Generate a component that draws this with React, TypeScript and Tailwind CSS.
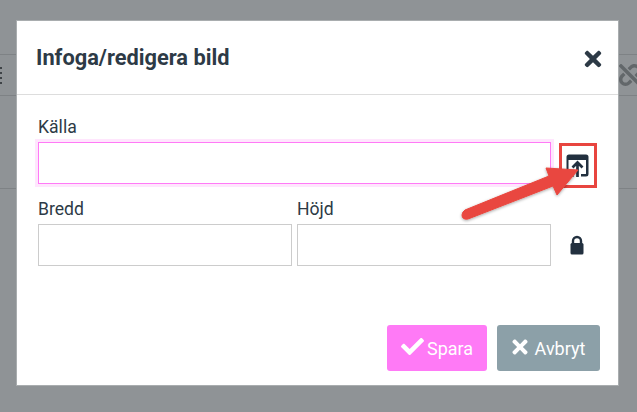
import { FaCheck, FaTimes, FaUnlink } from "react-icons/fa";

function Field({ label }: { label: string }) {
  return (
    <div className="flex flex-col">
      <label className="h-[26px] text-[17.6px] leading-[22px] text-[#2d3a46]">{label}</label>
      <div className="h-[42px] border border-[#cccccc] bg-white" />
    </div>
  );
}

export default function App() {
  return (
    <div className="relative h-[412px] w-[637px] overflow-hidden bg-[#8f9396] font-['Roboto',sans-serif]">
      <div className="mt-[54px] flex h-[42px] items-center justify-between border-y border-[#7e8285]">
        <div className="ml-[-4px] flex h-[17px] w-[6px] flex-col justify-between">
          <span className="h-[2px] w-[6px] bg-[#3e4347]" />
          <span className="h-[2px] w-[6px] bg-[#3e4347]" />
          <span className="h-[2px] w-[6px] bg-[#3e4347]" />
          <span className="h-[2px] w-[6px] bg-[#3e4347]" />
        </div>
        <FaUnlink className="mr-[-4px] h-[22px] w-[22px] text-[#62676a]" />
      </div>
      <div className="mt-[92px] border-t border-[#7e8285]" />

      <div className="absolute left-[17px] top-[21px] flex h-[364px] w-[601px] flex-col bg-white shadow-[0_0_0_1px_#a9adaf]">
        <div className="flex h-[74px] items-center justify-between border-b border-[#dddddd] pl-[19px] pr-[16px]">
          <h1 className="mt-[1px] text-[21.8px] font-bold leading-[26px] text-[#2d3a46]">Infoga/redigera bild</h1>
          <FaTimes className="mt-[3px] h-[24px] w-[18px] text-[#2d3a46]" />
        </div>

        <div className="flex flex-1 flex-col pl-[21px] pr-[18px] pt-[20px]">
          <div className="grid grid-cols-[513px_1fr] gap-x-[8px]">
            <div className="flex flex-col">
              <label className="h-[27px] text-[17.6px] leading-[25px] text-[#2d3a46]">Källa</label>
              <div className="h-[42px] border border-[#ff7af6] bg-white shadow-[0_0_0_3px_#ffe6fd]" />
            </div>
            <div className="mt-[28px] flex h-[45px] w-[38px] items-center justify-center border-[3px] border-[#e8453f]">
              <svg width="23" height="23" viewBox="0 0 23 23" className="ml-[-2px]">
                <path
                  d="M3 0.5h17a2.5 2.5 0 0 1 2.5 2.5v17a2.5 2.5 0 0 1-2.5 2.5h-5v-2.4h4.5a.5.5 0 0 0 .5-.5V6H2.5v14.1a.5.5 0 0 0 .5.5h4.500v2.4H3A2.500 2.500 0 0 1 .5 20V3A2.500 2.500 0 0 1 3 .5z"
                  fill="#22303f"
                />
                <path d="M6.500 13.500l5-5 5 5M11.500 9v14" fill="none" stroke="#22303f" strokeWidth="2.700" />
              </svg>
            </div>
          </div>

          <div className="mt-[10px] grid grid-cols-[254px_254px_1fr] gap-x-[5px]">
            <Field label="Bredd" />
            <Field label="Höjd" />
            <div className="flex items-start justify-center pr-[3px] pt-[37px]">
              <svg width="14" height="20" viewBox="0 0 14 20">
                <path d="M3 9V6a4 4 0 0 1 8 0v3" fill="none" stroke="#22303f" strokeWidth="2.400" />
                <rect x="0.500" y="8" width="13" height="11.500" rx="1.500" fill="#22303f" />
              </svg>
            </div>
          </div>

          <div className="mt-[59px] flex justify-end gap-[10px]">
            <button className="flex h-[46px] w-[100px] items-center justify-center gap-[3px] rounded-[3px] bg-[#ff7af6] text-[18px] text-white">
              <FaCheck className="mt-[-3px] h-[23px] w-[23px]" />
              Spara
            </button>
            <button className="flex h-[46px] w-[103px] items-center justify-center gap-[7px] rounded-[3px] bg-[#8ca0a8] text-[18px] text-white">
              <FaTimes className="mt-[-3px] h-[22px] w-[16px]" />
              Avbryt
            </button>
          </div>
        </div>
      </div>

      <svg className="absolute left-0 top-0" width="637" height="412" viewBox="0 0 637 412">
        <defs>
          <filter id="arrowShadow" x="-20%" y="-20%" width="140%" height="140%">
            <feDropShadow dx="0" dy="1" stdDeviation="1.500" floodColor="#000000" floodOpacity="0.350" />
          </filter>
        </defs>
        <path
          d="M578 170L557 195L553 186L468 219Q462 220 462 215Q462 212 465 210L549 176L546 168Z"
          fill="#e9473f"
          stroke="#e9473f"
          strokeWidth="1"
          strokeLinejoin="round"
          filter="url(#arrowShadow)"
        />
      </svg>
    </div>
  );
}
